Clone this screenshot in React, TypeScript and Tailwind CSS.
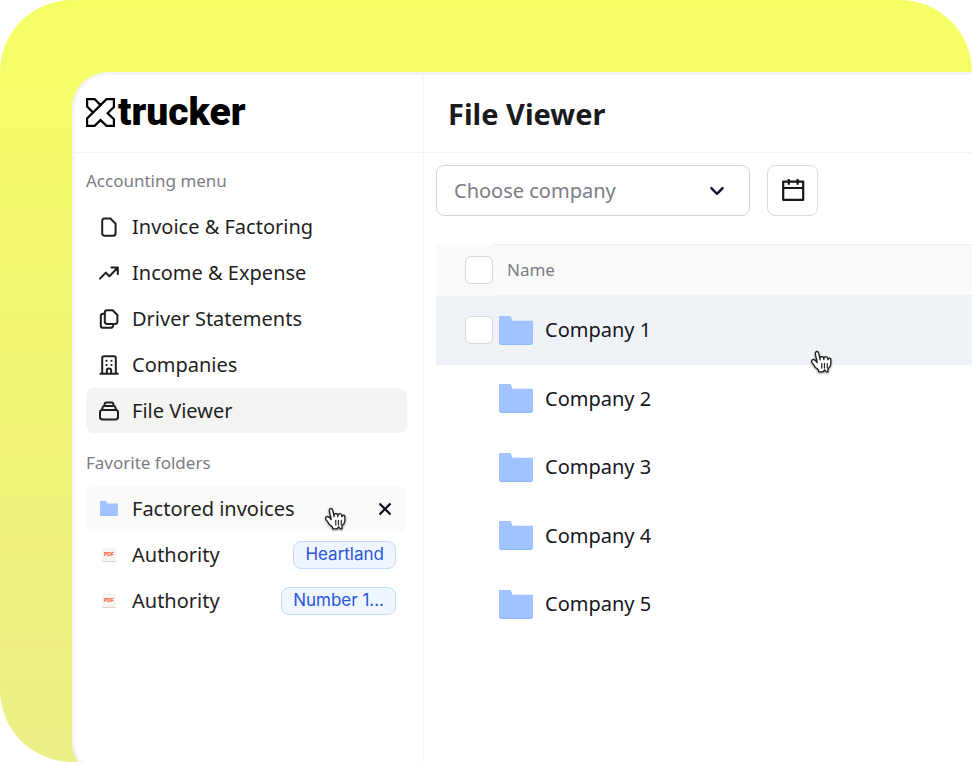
import type { ReactNode } from "react";

function Svg({ children, className = "size-6" }: { children: ReactNode; className?: string }) {
  return (
    <svg
      viewBox="0 0 24 24"
      fill="none"
      stroke="currentColor"
      strokeWidth="2"
      strokeLinecap="round"
      strokeLinejoin="round"
      aria-hidden="true"
      className={`shrink-0 ${className}`}
    >
      {children}
    </svg>
  );
}

const FileIcon = () => (
  <Svg>
    <path d="M7.600 3.500h5.800l5.200 5.200v9.600a2.400 2.400 0 0 1-2.400 2.400H7.600a2.400 2.400 0 0 1-2.400-2.400V5.900a2.400 2.400 0 0 1 2.400-2.400z" />
  </Svg>
);

const TrendIcon = () => (
  <Svg>
    <path d="M3 17.600l5.800-6 3.600 3.600 8.200-8.400M14.400 6.600h6.400v6.600" />
  </Svg>
);

const CopyIcon = () => (
  <Svg>
    <path d="M10.200 3.200h5.400l4.800 4.800v6.600a2.400 2.400 0 0 1-2.400 2.400h-7.800a2.400 2.400 0 0 1-2.400-2.400v-9a2.400 2.400 0 0 1 2.400-2.400z" />
    <path d="M7.800 6.800H6.200a2.400 2.400 0 0 0-2.400 2.400v9.200a2.400 2.400 0 0 0 2.400 2.400h7.600a2.400 2.400 0 0 0 2.300-2" />
  </Svg>
);

const BuildingIcon = () => (
  <Svg>
    <path d="M3.400 20.800h17.400M5.200 20.800V5a1.800 1.800 0 0 1 1.800-1.800h10A1.800 1.800 0 0 1 18.800 5v15.800M9.800 20.600v-3a2.200 2.200 0 0 1 4.400 0v3" />
    <path d="M9.400 7.800h.2M14.400 7.800h.2M9.400 12h.2M14.400 12h.2" />
  </Svg>
);

const StackIcon = () => (
  <Svg>
    <rect x="3" y="11" width="18" height="9.400" rx="2.400" />
    <path d="M5 10.800l.6-2.400a1.800 1.800 0 0 1 1.700-1.300h9.400a1.800 1.800 0 0 1 1.700 1.300l.6 2.400M7.200 6.900l.5-2.100a1.600 1.600 0 0 1 1.500-1.200h5.600a1.600 1.600 0 0 1 1.500 1.200l.5 2.100" />
  </Svg>
);

function FolderIcon({ className }: { className: string }) {
  return (
    <svg viewBox="0 0 34 29" preserveAspectRatio="none" aria-hidden="true" className={`shrink-0 ${className}`}>
      <path fill="#8db8fb" d="M0 6h34v20.600a2.400 2.400 0 0 1-2.400 2.400H2.400A2.400 2.400 0 0 1 0 26.600z" />
      <path fill="#a1c3ff" d="M0 0h10.400a2 2 0 0 1 1.900 1.400l.9 2.600a1 1 0 0 0 1 .7H34v20.900a2.200 2.200 0 0 1-2.200 2.200H2.200A2.200 2.200 0 0 1 0 25.600z" />
    </svg>
  );
}

function PdfIcon() {
  return (
    <span className="mx-[5px] flex h-[14px] w-[14px] shrink-0 items-center justify-center rounded-[1px] border-b border-[#d9d6d2] bg-[#f6f4f1] font-['Inter',sans-serif] text-[5px] leading-none font-extrabold text-[#ff5a36]">
      PDF
    </span>
  );
}

function HandCursor({ className }: { className: string }) {
  return (
    <svg
      viewBox="8 8 18 18"
      aria-hidden="true"
      className={`pointer-events-none absolute size-6 overflow-visible drop-shadow-[0_1px_1px_rgba(0,0,0,0.4)] ${className}`}
    >
      <path
        fill="#fff"
        stroke="#222"
        strokeWidth="1"
        strokeLinejoin="round"
        d="m11.3 20.4c-.3-.4-.6-1.1-1.2-2-.3-.5-1.2-1.5-1.5-1.9-.2-.4-.2-.6-.1-1 .1-.6.7-1.1 1.4-1.1.5 0 1 .4 1.4.7.2.2.5.6.7.8.2.2.2.3.4.5.2.3.3.5.2.1-.1-.5-.2-1.3-.4-2.1-.1-.6-.2-.7-.3-1.1-.1-.5-.2-.8-.3-1.3-.1-.3-.2-1.1-.3-1.500-.1-.5-.1-1.400.3-1.800.3-.3.9-.4 1.300-.2.5.3.8 1 .9 1.300.2.5.4 1.200.5 2 .2 1 .5 2.500.5 2.800 0-.4-.1-1.100 0-1.500.1-.3.3-.7.7-.8.3-.1.6-.1.9-.1.3.1.6.3.8.5.4.6.4 1.900.4 1.800.1-.4.1-1.200.3-1.600.1-.2.5-.4.7-.5.3-.1.7-.1 1 0 .2 0 .6.3.7.5.2.3.3 1.300.4 1.700 0 .1.1-.4.3-.7.4-.6 1.800-.8 1.900.6v2.300c0 .4-.1 1.300-.2 1.700-.1.3-.4 1-.7 1.400 0 0-1.100 1.200-1.200 1.800-.1.6-.1.6-.1 1s.1.9.1.9-.8.1-1.200 0-.9-.8-1-1.100c-.2-.3-.5-.3-.7 0-.2.4-.7 1.100-1.100 1.100-.7.1-2.100 0-3.100 0 0 0 .2-1-.2-1.400-.3-.3-.8-.8-1.100-1.100z"
      />
      <path stroke="#222" strokeWidth=".9" strokeLinecap="round" d="M20.200 17.300v3.500M18.100 17.300v3.500M16.100 17.300v3.500" />
    </svg>
  );
}

const menu = [
  { label: "Invoice & Factoring", icon: <FileIcon /> },
  { label: "Income & Expense", icon: <TrendIcon /> },
  { label: "Driver Statements", icon: <CopyIcon /> },
  { label: "Companies", icon: <BuildingIcon /> },
  { label: "File Viewer", icon: <StackIcon />, active: true },
];

const companies = ["Company 1", "Company 2", "Company 3", "Company 4", "Company 5"];

const row = "flex h-[45px] w-full items-center gap-[11px] rounded-lg pr-[11px] pl-[11px]";
const tag =
  "ml-auto flex h-7 items-center rounded-lg border border-[#bfdbfe] bg-[#eff6ff] px-[11px] font-['Inter',sans-serif] text-[17px] text-[#2a55d9]";
const box =
  "block size-7 appearance-none rounded-md border border-[#d8d8d8] bg-white checked:bg-[#a1c3ff]";

function Sidebar() {
  return (
    <aside className="w-[349px] shrink-0 border-r border-[#f4f4f5]">
      <div className="flex h-[78px] items-center gap-[3px] border-b border-[#f4f4f5] pb-[3px] pl-[11px]">
        <svg viewBox="0 0 29 29" fill="none" stroke="#000" strokeWidth="2.200" aria-hidden="true" className="size-[29px]">
          <path d="M1.100 1.100h7.500l5.900 6 6-6h7.400V9l-6.300 6.200 6.300 6.100v6.600h-7.400l-6-5.800-5.900 5.800H1.100v-7.500l5.900-6-5.900-5.800z" />
          <path d="M6.600 15L15 6.600" />
        </svg>
        <span className="font-['Roboto',sans-serif] text-[39px] leading-none font-black text-black">trucker</span>
      </div>
      <nav aria-label="Accounting menu" className="pt-4 pr-4 pl-[11px]">
        <h2 className="text-[17px] leading-6 text-[#7c7c85]">Accounting menu</h2>
        <ul className="mt-[11px] flex flex-col gap-px">
          {menu.map((m) => (
            <li key={m.label}>
              <a href="#" className={`${row} ${m.active ? "bg-[#f4f4f3]" : ""}`}>
                {m.icon}
                {m.label}
              </a>
            </li>
          ))}
        </ul>
      </nav>
      <section aria-label="Favorite folders" className="pt-[18px] pr-4 pl-[11px]">
        <h2 className="text-[17px] leading-6 text-[#7c7c85]">Favorite folders</h2>
        <ul className="mt-[11px] flex flex-col gap-px">
          <li className={`${row} relative bg-[#fafaf9]`}>
            <FolderIcon className="mx-[3px] h-[15px] w-[18px]" />
            <a href="#">Factored invoices</a>
            <button type="button" aria-label="Remove Factored invoices" className="ml-auto text-[#0b0b1f]">
              <Svg className="size-[22px]">
                <path strokeWidth="2.400" strokeLinecap="butt" d="M6 6l12 12M18 6l-12 12" />
              </Svg>
            </button>
            <HandCursor className="top-[22px] right-[58px]" />
          </li>
          <li className={row}>
            <PdfIcon />
            <a href="#">Authority</a>
            <span className={tag}>Heartland</span>
          </li>
          <li className={row}>
            <PdfIcon />
            <a href="#">Authority</a>
            <span className={tag}>Number 1...</span>
          </li>
        </ul>
      </section>
    </aside>
  );
}

function FileTable() {
  return (
    <div className="relative mt-7">
      <table className="w-full border-collapse text-left">
        <thead>
          <tr className="h-[51px] bg-[#fafafa] text-[17px] text-[#7c7c85]">
            <th className="w-[57px] p-0 pl-[29px]">
              <input type="checkbox" aria-label="Select all" className={box} />
            </th>
            <th className="border-y border-[#f1f1f3] p-0 pl-[14px] font-normal">Name</th>
          </tr>
        </thead>
        <tbody>
          {companies.map((name, i) => (
            <tr key={name} className={`odd:h-[69px] even:h-[68px] ${i === 0 ? "bg-[#eff3f8]" : ""}`}>
              <td className="w-[57px] p-0 pl-[29px]">
                {i === 0 && <input type="checkbox" aria-label={`Select ${name}`} className={box} />}
              </td>
              <td className="p-0 pl-[6px]">
                <div className="flex items-center gap-3 text-[#16161f]">
                  <FolderIcon className="h-[29px] w-[34px]" />
                  {name}
                </div>
              </td>
            </tr>
          ))}
        </tbody>
      </table>
      <HandCursor className="top-[107px] left-[375px]" />
    </div>
  );
}

export default function App() {
  return (
    <div className="h-screen overflow-hidden rounded-l-[72px] rounded-tr-[72px] bg-linear-to-b from-[#f6ff64] to-[#ecee86] font-['Noto_Sans','Open_Sans',sans-serif] text-[20px] text-[#1f1f22]">
      <div className="flex h-full pt-[72px] pl-[72px]">
        <div className="-mb-4 flex min-w-0 flex-1 overflow-hidden rounded-l-[36px] border-[3px] border-r-0 border-[#f3f4f4] bg-white">
          <Sidebar />
          <main className="min-w-0 flex-1">
            <header className="flex h-[78px] items-center border-b border-[#f4f4f5] pl-6">
              <h1 className="text-[29px] font-bold text-[#1b1b1d]">File Viewer</h1>
            </header>
            <div className="pt-3 pl-3">
              <div className="flex gap-[17px]">
                <div className="relative w-[314px]">
                  <select
                    aria-label="Choose company"
                    defaultValue=""
                    className="h-[51px] w-full appearance-none rounded-lg border border-[#d1d5db] bg-white pl-[17px] text-[20px] text-[#7c7c85]"
                  >
                    <option value="">Choose company</option>
                    {companies.map((c) => (
                      <option key={c}>{c}</option>
                    ))}
                  </select>
                  <Svg className="pointer-events-none absolute top-[14px] right-[21px] size-6 text-[#0b0b2a]">
                    <path strokeWidth="2.400" d="M6.400 9.200l5.600 5.600 5.600-5.600" />
                  </Svg>
                </div>
                <button
                  type="button"
                  aria-label="Pick a date"
                  className="flex size-[51px] items-center justify-center rounded-lg border border-[#d9dbe0] bg-white text-[#161616]"
                >
                  <svg viewBox="0 0 24 24" fill="none" stroke="currentColor" strokeWidth="2.200" strokeLinejoin="round" aria-hidden="true" className="size-6">
                    <path d="M2.200 2.600h20v18.200h-20zM2.200 9h20M7.800 0v5.800M16.600 0v5.800" />
                  </svg>
                </button>
              </div>
              <FileTable />
            </div>
          </main>
        </div>
      </div>
    </div>
  );
}
